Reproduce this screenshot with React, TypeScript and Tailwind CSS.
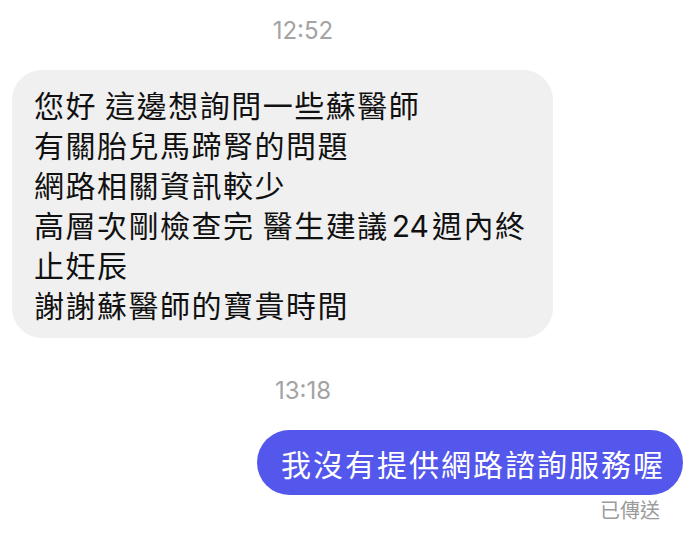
import React from 'react';

const cjk = "font-['Noto_Sans_CJK_TC','Noto_Sans_CJK_SC',sans-serif]";

const incomingLines: React.ReactNode[] = [
  '您好 這邊想詢問一些蘇醫師',
  '有關胎兒馬蹄腎的問題',
  '網路相關資訊較少',
  <>
    高層次剛檢查完 醫生建議<span className="font-['Inter',sans-serif] leading-none tracking-normal mx-[3px]">24</span>週內終
  </>,
  '止妊辰',
  '謝謝蘇醫師的寶貴時間',
];

const TimeStamp: React.FC<{ time: string; className?: string }> = ({ time, className }) => (
  <div className={`w-[606px] flex justify-center ${className ?? ''}`}>
    <span className="font-['Inter',sans-serif] text-[24px] leading-[28px] text-[#a3a3a3]">{time}</span>
  </div>
);

const App: React.FC = () => {
  return (
    <div className={`w-[699px] h-[540px] bg-white flex flex-col overflow-hidden ${cjk}`}>
      {/* first timestamp */}
      <TimeStamp time="12:52" className="mt-[17px]" />

      {/* incoming message */}
      <div className="mt-[25px] ml-[12px] w-[541px] bg-[#f0f0f0] rounded-[30px] pl-[22px] pr-4 pt-[14px] pb-[14px]">
        {incomingLines.map((line, i) => (
          <div key={i} className="h-[40px] text-[30px] leading-[40px] tracking-[1.5px] text-[#111111] whitespace-nowrap">
            {line}
          </div>
        ))}
      </div>

      {/* second timestamp */}
      <TimeStamp time="13:18" className="mt-[39px]" />

      {/* outgoing message */}
      <div className="mt-[25px] self-end mr-[16px] h-[65px] pl-[24px] pr-[18px] flex items-center rounded-full bg-[#5457ec]">
        <span className="text-[30px] leading-none tracking-[2px] text-white whitespace-nowrap">我沒有提供網路諮詢服務喔</span>
      </div>
      <div className="mt-[3px] self-end mr-[39px] text-[20px] leading-[24px] text-[#9b9b9b]">已傳送</div>
    </div>
  );
};

export default App;
